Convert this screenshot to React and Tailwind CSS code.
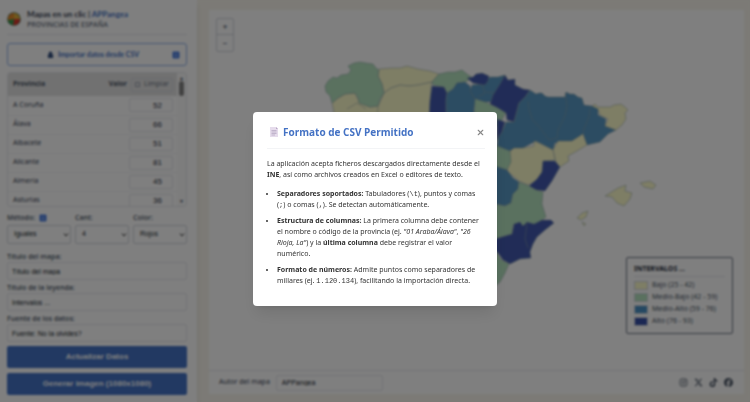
import { useState } from 'react';
import { X } from 'lucide-react';
import { FaInstagram, FaXTwitter, FaTiktok, FaFacebook } from 'react-icons/fa6';

const PROVINCES = [
  { name: 'A Coruña', value: 52 },
  { name: 'Álava', value: 66 },
  { name: 'Albacete', value: 51 },
  { name: 'Alicante', value: 81 },
  { name: 'Almería', value: 45 },
  { name: 'Asturias', value: 36 },
];

const SELECTS = [
  { id: 'metodo', label: 'Método:', value: 'Iguales', width: 'w-16', info: true },
  { id: 'cant', label: 'Cant:', value: '4', width: 'w-[54px]' },
  { id: 'color', label: 'Color:', value: 'Rojos', width: 'flex-1' },
];

const FIELDS = [
  { id: 'titulo', label: 'Título del mapa:', value: 'Título del mapa' },
  { id: 'leyenda', label: 'Título de la leyenda:', value: 'Intervalos ...' },
  { id: 'fuente', label: 'Fuente de los datos:', value: 'Fuente: No la olvides?' },
];

const LEGEND = [
  { label: 'Bajo (25 - 42)', swatch: 'bg-[#fdfccb]' },
  { label: 'Medio-Bajo (42 - 59)', swatch: 'bg-[#b4e2bf]' },
  { label: 'Medio-Alto (59 - 76)', swatch: 'bg-[#4a90c4]' },
  { label: 'Alto (76 - 93)', swatch: 'bg-[#344ea6]' },
];

const SOCIAL = [
  { label: 'Instagram', icon: FaInstagram },
  { label: 'X', icon: FaXTwitter },
  { label: 'TikTok', icon: FaTiktok },
  { label: 'Facebook', icon: FaFacebook },
];

const LOW = '#fdfccb';
const MID_LOW = '#b4e2bf';
const MID_HIGH = '#5898c4';
const HIGH = '#4259ae';

const REGIONS = [
  { fill: LOW, points: '332,102 338,97 345,93 355,92 360,102 370,106 378,105 384,92 384,140 340,140 334,112' },
  { fill: LOW, points: '379,68 391,67 400,67 407,65 418,68 430,70 439,73 432,81 418,84 409,85 400,84 391,87 384,92 382,83 378,75' },
  { fill: LOW, points: '384,92 391,87 400,84 409,85 418,84 432,81 431,86 430,100 428,140 376,140 378,105' },
  { fill: MID_LOW, points: '325,85 328,80 333,76 337,77 341,74 348,73 351,69 348,65 354,62 360,61 366,62 373,63 376,67 379,69 378,75 380,79 382,83 384,92 380,98 378,105 370,106 359,102 358,97 355,92 345,93 338,97 332,102 330,95 326,91' },
  { fill: MID_LOW, points: '439,73 448,71 455,71 462,69 467,73 473,77 465,81 457,82 453,88 447,92 444,86 433,84 432,81' },
  { fill: HIGH, points: '432,85 444,86 447,92 446,100 447,140 428,140 430,100' },
  { fill: MID_HIGH, points: '447,92 453,88 457,82 465,81 470,85 472,92 476,98 474,108 474,140 447,140 446,100' },
  { fill: MID_HIGH, points: '472,84 482,83 490,76 498,76 505,74 503,80 494,101 484,101 475,98 470,90' },
  { fill: HIGH, points: '467,77 473,76 476,73 482,72 489,75 488,80 485,84 478,83 473,82' },
  { fill: MID_LOW, points: '475,98 485,101 494,105 506,111 501,121 497,125 474,125' },
  { fill: HIGH, points: '505,74 508,79 515,78 515,84 523,88 530,89 526,95 519,102 517,110 514,121 507,119 506,112 498,107 490,103 493,94 500,83' },
  { fill: HIGH, points: '497,118 505,121 502,131 497,139' },
  { fill: MID_HIGH, points: '530,89 533,91 536,93 539,92 542,92 545,95 548,96 565,96 566,91 570,93 574,93 578,96 582,97 584,104 592,105 598,107 598,114 606,118 605,125 616,129 608,133 600,141 587,144 583,133 572,140 555,142 553,149 536,140 523,147 510,150 497,148 498,137 502,131 506,121 514,121 517,110 519,102 526,95' },
  { fill: LOW, points: '592,105 595,103 598,106 604,106 610,106 614,104 621,103 625,106 628,109 625,112 626,118 622,124 616,129 605,125 608,118 600,114 598,108' },
  { fill: LOW, points: '583,133 587,144 577,150 568,155 569,160 560,166 556,162 553,149 558,140 572,140' },
  { fill: LOW, points: '510,150 514,147 523,147 534,145 534,140 541,143 553,149 555,159 543,160 542,171 536,180 528,184 519,180 507,170' },
  { fill: HIGH, points: '543,160 555,160 560,166 552,180 545,190 536,189 529,185 537,178 542,171' },
  { fill: MID_LOW, points: '495,144 510,150 511,161 507,169 495,166' },
  { fill: MID_HIGH, points: '495,165 507,169 513,177 519,181 518,188 513,193 511,202 505,205 495,203' },
  { fill: MID_LOW, points: '519,181 529,185 536,189 543,191 542,203 546,216 533,226 520,224 513,224 512,233 495,238 495,203 505,205 511,202 513,193 518,188' },
  { fill: HIGH, points: '495,238 512,233 514,223 520,221 523,225 527,221 534,223 542,219 551,219 554,222 545,229 537,236 533,243 530,251 531,257 520,258 510,263 503,259 498,252 495,249' },
  { fill: MID_LOW, points: '495,249 499,256 503,260 509,263 505,272 500,281 495,285' },
  { fill: LOW, points: '605,195 613,190 618,187 626,184 625,190 632,192 630,198 624,205 617,202 612,196' },
  { fill: LOW, points: '577,217 582,212 588,210 586,216 581,219' },
  { fill: LOW, points: '582,221 586,223 584,225' },
  { fill: LOW, points: '640,182 650,180 656,184 653,188 644,186' },
];

const BORDERS = [
  '528,100 529,108 532,118 540,127 549,139 557,137 558,129 565,115 567,105 565,92',
  '590,107 589,116 584,128 583,133',
  '527,222 526,230 525,238 528,247',
  '347,108 357,102 366,108',
  '482,84 485,92 478,96',
  '486,91 494,92',
];

function ProvinceMap() {
  return (
    <svg viewBox="209 10 535 358" className="h-full w-full" role="img" aria-label="Provincias">
      <g stroke="#8fa3a3" strokeWidth="0.5" strokeLinejoin="round">
        {REGIONS.map(({ fill, points }) => <polygon key={points} fill={fill} points={points} />)}
        {BORDERS.map((points) => <polyline key={points} fill="none" points={points} />)}
      </g>
    </svg>
  );
}

function Logo() {
  return (
    <svg viewBox="0 0 14 14" className="size-3.5 shrink-0">
      <circle cx="7" cy="7" r="6.8" fill="#4c6b55" />
      <path d="M7 7V1A6 6 0 0 1 13 7Z" fill="#e0b23c" />
      <path d="M7 7H13A6 6 0 0 1 6 13Z" fill="#d8382c" />
      <path d="M7 7L6 13A6 6 0 0 1 1 8Z" fill="#3c9a4c" />
      <path d="M7 7L1 8A6 6 0 0 1 7 1Z" fill="#e58a2c" />
    </svg>
  );
}

function InfoBadge() {
  return (
    <svg viewBox="0 0 8 8" className="size-2 shrink-0">
      <rect x="0.5" y="0.5" width="7" height="7" rx="1" fill="#4c7fe0" />
      <path d="M4 3.5V6M4 2V2.6" stroke="#cfdcf8" strokeWidth="0.9" />
    </svg>
  );
}

function Sidebar({ onImport }) {
  return (
    <aside className="z-10 flex w-[197px] shrink-0 flex-col bg-white pr-2.5 pl-[7px] shadow-md">
      <header className="flex h-[35px] shrink-0 items-center gap-1.5 border-b border-gray-200 pt-1">
        <Logo />
        <div>
          <h1 className="font-['Lato',sans-serif] text-[8px] leading-[11px] font-bold text-gray-700">
            Mapas en un clic | <a href="#" className="text-[#4472c4]">APPangea</a>
          </h1>
          <p className="font-['Open_Sans',sans-serif] text-[7px] leading-[9px] font-semibold text-gray-500">PROVINCIAS DE ESPAÑA</p>
        </div>
      </header>

      <button
        onClick={onImport}
        className="mt-2 flex h-[23px] shrink-0 items-center rounded-[3px] border border-[#8fb0e8] px-1.5 font-['Lato',sans-serif] text-[7px] font-bold text-[#4472c4]"
      >
        <span className="flex flex-1 items-center justify-center gap-1">
          <svg viewBox="0 0 8 8" className="size-[7px]"><path d="M2 4V2.5a2 2 0 0 1 4 0V4h1v4H1V4Z" fill="#355080" /></svg>
          Importar datos desde CSV
        </span>
        <InfoBadge />
      </button>

      <div className="mt-1.5 flex h-[135px] shrink-0 overflow-hidden rounded-[3px] border border-gray-200">
        <table className="h-fit flex-1 text-[7px]">
          <thead className="bg-[#e2e2e2] text-gray-600">
            <tr className="h-[23px]">
              <th className="pl-[5px] text-left">Provincia</th>
              <th className="w-14 pr-1 text-right">Valor</th>
              <th className="w-[46px]">
                <button className="flex h-3.5 w-[42px] items-center justify-center gap-1 rounded-[2px] border border-gray-300 text-[7px] font-normal text-gray-500">
                  <span className="size-[5px] border border-gray-400" />
                  Limpiar
                </button>
              </th>
            </tr>
          </thead>
          <tbody>
            {PROVINCES.map(({ name, value }) => (
              <tr key={name} className="h-[19px] border-b border-gray-100">
                <td className="pl-[5px] text-gray-700">{name}</td>
                <td colSpan={2} className="pr-1">
                  <input
                    aria-label={name}
                    defaultValue={value}
                    className="ml-auto block h-3.5 w-11 rounded-[2px] border border-gray-200 pr-2.5 text-right font-['Liberation_Sans',sans-serif] text-[8px] text-gray-800"
                  />
                </td>
              </tr>
            ))}
          </tbody>
        </table>
        <div className="flex w-[9px] flex-col items-center justify-between bg-[#fafafa] py-0.5 text-[5px] leading-[6px] text-gray-600">
          <div className="flex flex-col items-center">
            ▲
            <span className="h-[15px] w-[5px] rounded-full bg-[#858585]" />
          </div>
          ▼
        </div>
      </div>

      <div className="mt-1 flex gap-1">
        {SELECTS.map(({ id, label, value, width, info }) => (
          <div key={id} className={width}>
            <label htmlFor={id} className="flex h-3.5 items-center gap-1 font-['Open_Sans',sans-serif] text-[7px] font-semibold text-gray-600">
              {label}
              {info && <InfoBadge />}
            </label>
            <div className="relative">
              <select
                id={id}
                className="block h-[19px] w-full appearance-none rounded-[2px] border border-gray-300 pl-1.5 font-['Liberation_Sans',sans-serif] text-[7px] text-gray-900"
              >
                <option>{value}</option>
              </select>
              <svg viewBox="0 0 6 4" className="pointer-events-none absolute top-2 right-0.5 h-1 w-1.5">
                <path d="M1 0.5L3 3L5 0.5" fill="none" stroke="#333" strokeWidth="1" />
              </svg>
            </div>
          </div>
        ))}
      </div>

      <div className="mt-2 flex flex-col gap-[3px]">
        {FIELDS.map(({ id, label, value }) => (
          <div key={id}>
            <label htmlFor={id} className="block font-['Open_Sans',sans-serif] text-[7px] leading-[10px] font-semibold text-gray-600">{label}</label>
            <input
              id={id}
              defaultValue={value}
              className="block h-[18px] w-full rounded-[2px] border border-gray-200 px-1 font-['Liberation_Sans',sans-serif] text-[7px] text-gray-900"
            />
          </div>
        ))}
      </div>

      <div className="mt-1 flex flex-col gap-[5px] font-['Liberation_Sans',sans-serif] text-[8px] font-bold text-white">
        <button className="h-[22px] rounded-[2px] bg-[#4472c4]">Actualizar Datos</button>
        <button className="h-[22px] rounded-[2px] bg-[#4472c4]">Generar imagen (1080x1080)</button>
      </div>
    </aside>
  );
}

function MapPanel() {
  return (
    <main className="flex flex-1 bg-[#f8f5ec] pt-2.5 pr-1.5 pb-2 pl-3">
      <section className="flex flex-1 flex-col bg-white">
        <div className="relative min-h-0 flex-1">
          <ProvinceMap />
          <div className="absolute top-2 left-[7px] flex w-[18px] flex-col rounded-[2px] border border-gray-300 text-[8px] font-bold text-gray-500">
            <button className="h-4 border-b border-gray-300">+</button>
            <button className="h-4">−</button>
          </div>
          <div className="absolute right-[11px] bottom-9 h-[77px] w-[107px] rounded-[2px] border border-gray-500 bg-white px-[7px] pt-1.5">
            <h2 className="border-b border-gray-200 pb-0.5 text-[7px] leading-[10px] font-bold text-gray-800">INTERVALOS ...</h2>
            <ul className="mt-0.5 text-[7px] text-gray-600">
              {LEGEND.map(({ label, swatch }) => (
                <li key={label} className="flex h-3 items-center gap-1">
                  <span className={`h-[9px] w-3.5 border border-gray-300 ${swatch}`} />
                  {label}
                </li>
              ))}
            </ul>
          </div>
        </div>
        <footer className="flex h-6 items-center border-t border-gray-200 pr-[11px] pl-2.5">
          <label htmlFor="autor" className="text-[7px] text-gray-700">Autor del mapa</label>
          <input
            id="autor"
            defaultValue="APPangea"
            className="ml-1.5 h-4 w-[107px] rounded-[2px] border border-gray-200 px-[5px] font-['Liberation_Sans',sans-serif] text-[7px] text-gray-900"
          />
          <nav className="ml-auto flex gap-1.5 text-gray-600">
            {SOCIAL.map(({ label, icon: Icon }) => (
              <a key={label} href="#" aria-label={label}><Icon size={9} /></a>
            ))}
          </nav>
        </footer>
      </section>
    </main>
  );
}

function Code({ children }) {
  return <code className="font-['Liberation_Mono',monospace] text-[7px] leading-none">{children}</code>;
}

function CsvHelp({ onClose }) {
  return (
    <div className="fixed inset-0 z-20 flex items-start justify-center bg-black/50 pt-28 backdrop-blur-[1px]">
      <div role="dialog" aria-labelledby="csv-title" className="w-[244px] rounded-[4px] bg-white pt-2.5 pr-3 pb-5 pl-3.5 text-[#333] shadow-lg">
        <header className="flex h-[27px] items-start border-b border-gray-100">
          <svg viewBox="0 0 10 12" className="mt-1 ml-0.5 h-3 w-2.5">
            <path d="M1 1H7L9 3V11H1Z" fill="#e6dcec" />
            <path d="M7 1V3H9Z" fill="#b9a8c8" />
            <path d="M2.5 4.5H7.5M2.5 6H7.5M2.5 7.5H7.5M2.5 9H6" stroke="#a99bb8" strokeWidth="0.6" />
          </svg>
          <h2 id="csv-title" className="ml-1 font-['Open_Sans',sans-serif] text-[10px] leading-5 font-bold text-[#4472c4]">Formato de CSV Permitido</h2>
          <button onClick={onClose} aria-label="Cerrar" className="mt-1.5 ml-auto text-[#888]">
            <X size={9} strokeWidth={3} />
          </button>
        </header>
        <p className="mt-[9px] text-[7px] leading-[11px]">
          La aplicación acepta ficheros descargados directamente desde el <b>INE</b>, así como archivos creados en Excel o editores de texto.
        </p>
        <ul className="mt-2 flex list-disc flex-col gap-[5px] pl-2.5 text-[7px] leading-[11px]">
          <li>
            <b>Separadores soportados:</b> Tabuladores (<Code>\t</Code>), puntos y comas (<Code>;</Code>) o comas (<Code>,</Code>). Se detectan automáticamente.
          </li>
          <li>
            <b>Estructura de columnas:</b> La primera columna debe contener el nombre o código de la provincia (ej. <i>"01 Araba/Álava"</i>, <i>"26 Rioja, La"</i>) y la <b>última columna</b> debe registrar el valor numérico.
          </li>
          <li>
            <b>Formato de números:</b> Admite puntos como separadores de millares (ej. <Code>1.120.134</Code>), facilitando la importación directa.
          </li>
        </ul>
      </div>
    </div>
  );
}

export default function App() {
  const [helpOpen, setHelpOpen] = useState(true);

  return (
    <div className="flex h-screen overflow-hidden font-['Noto_Sans','Open_Sans',sans-serif]">
      <Sidebar onImport={() => setHelpOpen(true)} />
      <MapPanel />
      {helpOpen && <CsvHelp onClose={() => setHelpOpen(false)} />}
    </div>
  );
}
